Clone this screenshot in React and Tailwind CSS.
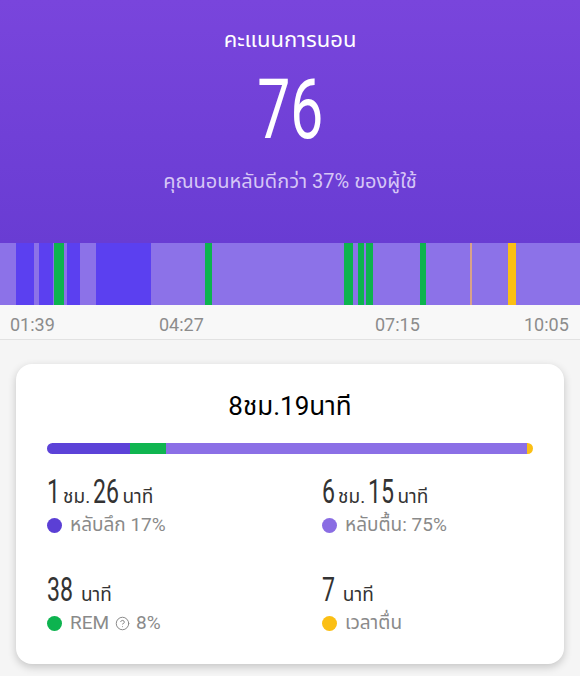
import React from 'react';
import { CircleHelp } from 'lucide-react';

const THAI = { fontFamily: "Roboto, 'Noto Sans Thai', sans-serif" };

// timeline segments over the light base: [start, end, color]
const segments = [
  [16, 34, '#5b40f0'],
  [39, 53, '#5b40f0'],
  [54, 64, '#0db34f'],
  [67, 80, '#5b40f0'],
  [96, 151, '#5b40f0'],
  [205, 212, '#0db34f'],
  [344, 353, '#0db34f'],
  [358, 364, '#0db34f'],
  [366, 373, '#0db34f'],
  [420, 426, '#0db34f'],
  [470, 472, '#d9a28a'],
  [508, 516, '#fbbf14'],
];

const axis = [
  { t: '01:39', x: 10 },
  { t: '04:27', x: 159 },
  { t: '07:15', x: 375 },
  { t: '10:05', x: 524 },
];

// condensed digits: Roboto squeezed; margin pulls back the width the transform leaves behind
function Num({ t }) {
  return (
    <span
      className="inline-block text-[34px] leading-[30px] origin-left scale-x-[0.68]"
      style={{ marginRight: -t.length * 6 }}
    >
      {t}
    </span>
  );
}

function Stat({ parts, dot, label, extra }) {
  return (
    <div className="flex flex-col">
      <div className="flex items-baseline text-[#333333]">
        {parts.map((p, i) =>
          p.big ? (
            <Num key={i} t={p.t} />
          ) : (
            <span key={i} className="text-[19px] leading-[30px] ml-[3px] mr-[3px]">{p.t}</span>
          )
        )}
      </div>
      <div className="flex items-center gap-2 mt-[1px] text-[19px] leading-6 text-[#8a8a8a]">
        <span className="w-[15px] h-[15px] rounded-full shrink-0" style={{ background: dot }} />
        <span className="flex items-center gap-1.5">{label}{extra}</span>
      </div>
    </div>
  );
}

export default function App() {
  return (
    <div className="w-[580px] h-[676px] overflow-hidden bg-[#f5f5f5]" style={THAI}>
      {/* header */}
      <div className="h-[243px] bg-gradient-to-b from-[#7945dc] to-[#693cd3] flex flex-col items-center text-white">
        <div className="mt-[24px] text-[22px] leading-8">คะแนนการนอน</div>
        <div className="mt-[12px] text-[84px] leading-[84px] scale-x-[0.7]">76</div>
        <div className="mt-[14px] text-[20px] text-[#d6c6f6]">คุณนอนหลับดีกว่า 37% ของผู้ใช้</div>
      </div>

      {/* timeline */}
      <svg width="580" height="62" className="block">
        <rect x="0" y="0" width="580" height="62" fill="#8c72e8" />
        {segments.map(([a, b, c], i) => (
          <rect key={i} x={a} y="0" width={b - a} height="62" fill={c} />
        ))}
      </svg>
      <div className="relative h-[35px] bg-[#f8f8f8] border-b border-[#e2e2e2]">
        {axis.map((a) => (
          <span key={a.t} className="absolute top-[6px] text-[18px] text-[#8c8c8c]" style={{ left: a.x }}>{a.t}</span>
        ))}
      </div>

      {/* summary card */}
      <div className="mx-4 mt-6 h-[300px] bg-white rounded-2xl shadow-[0_3px_8px_rgba(0,0,0,0.2)] px-[31px] pt-[24px]">
        <div className="text-center text-[26px] text-black leading-9">8ชม.19นาที</div>
        <div className="mt-[19px] h-[11px] rounded-full overflow-hidden flex">
          <div className="w-[83px] bg-[#5c42d8]" />
          <div className="w-[36px] bg-[#10b550]" />
          <div className="flex-1 bg-[#8b6fe6]" />
          <div className="w-[6px] bg-[#fbbf14]" />
        </div>
        <div className="grid grid-cols-2 mt-[22px] gap-y-[37px]">
          <Stat parts={[{ t: '1', big: true }, { t: 'ชม.' }, { t: '26', big: true }, { t: 'นาที' }]} dot="#5b3fd5" label="หลับลึก 17%" />
          <div className="pl-[32px]">
            <Stat parts={[{ t: '6', big: true }, { t: 'ชม.' }, { t: '15', big: true }, { t: 'นาที' }]} dot="#8a6de3" label="หลับตื้น: 75%" />
          </div>
          <Stat parts={[{ t: '38', big: true }, { t: '\u00a0นาที' }]} dot="#0db34f" label="REM" extra={<><CircleHelp className="w-[15px] h-[15px]" strokeWidth={1.6} /> 8%</>} />
          <div className="pl-[32px]">
            <Stat parts={[{ t: '7', big: true }, { t: '\u00a0นาที' }]} dot="#fbbf14" label="เวลาตื่น" />
          </div>
        </div>
      </div>
    </div>
  );
}
